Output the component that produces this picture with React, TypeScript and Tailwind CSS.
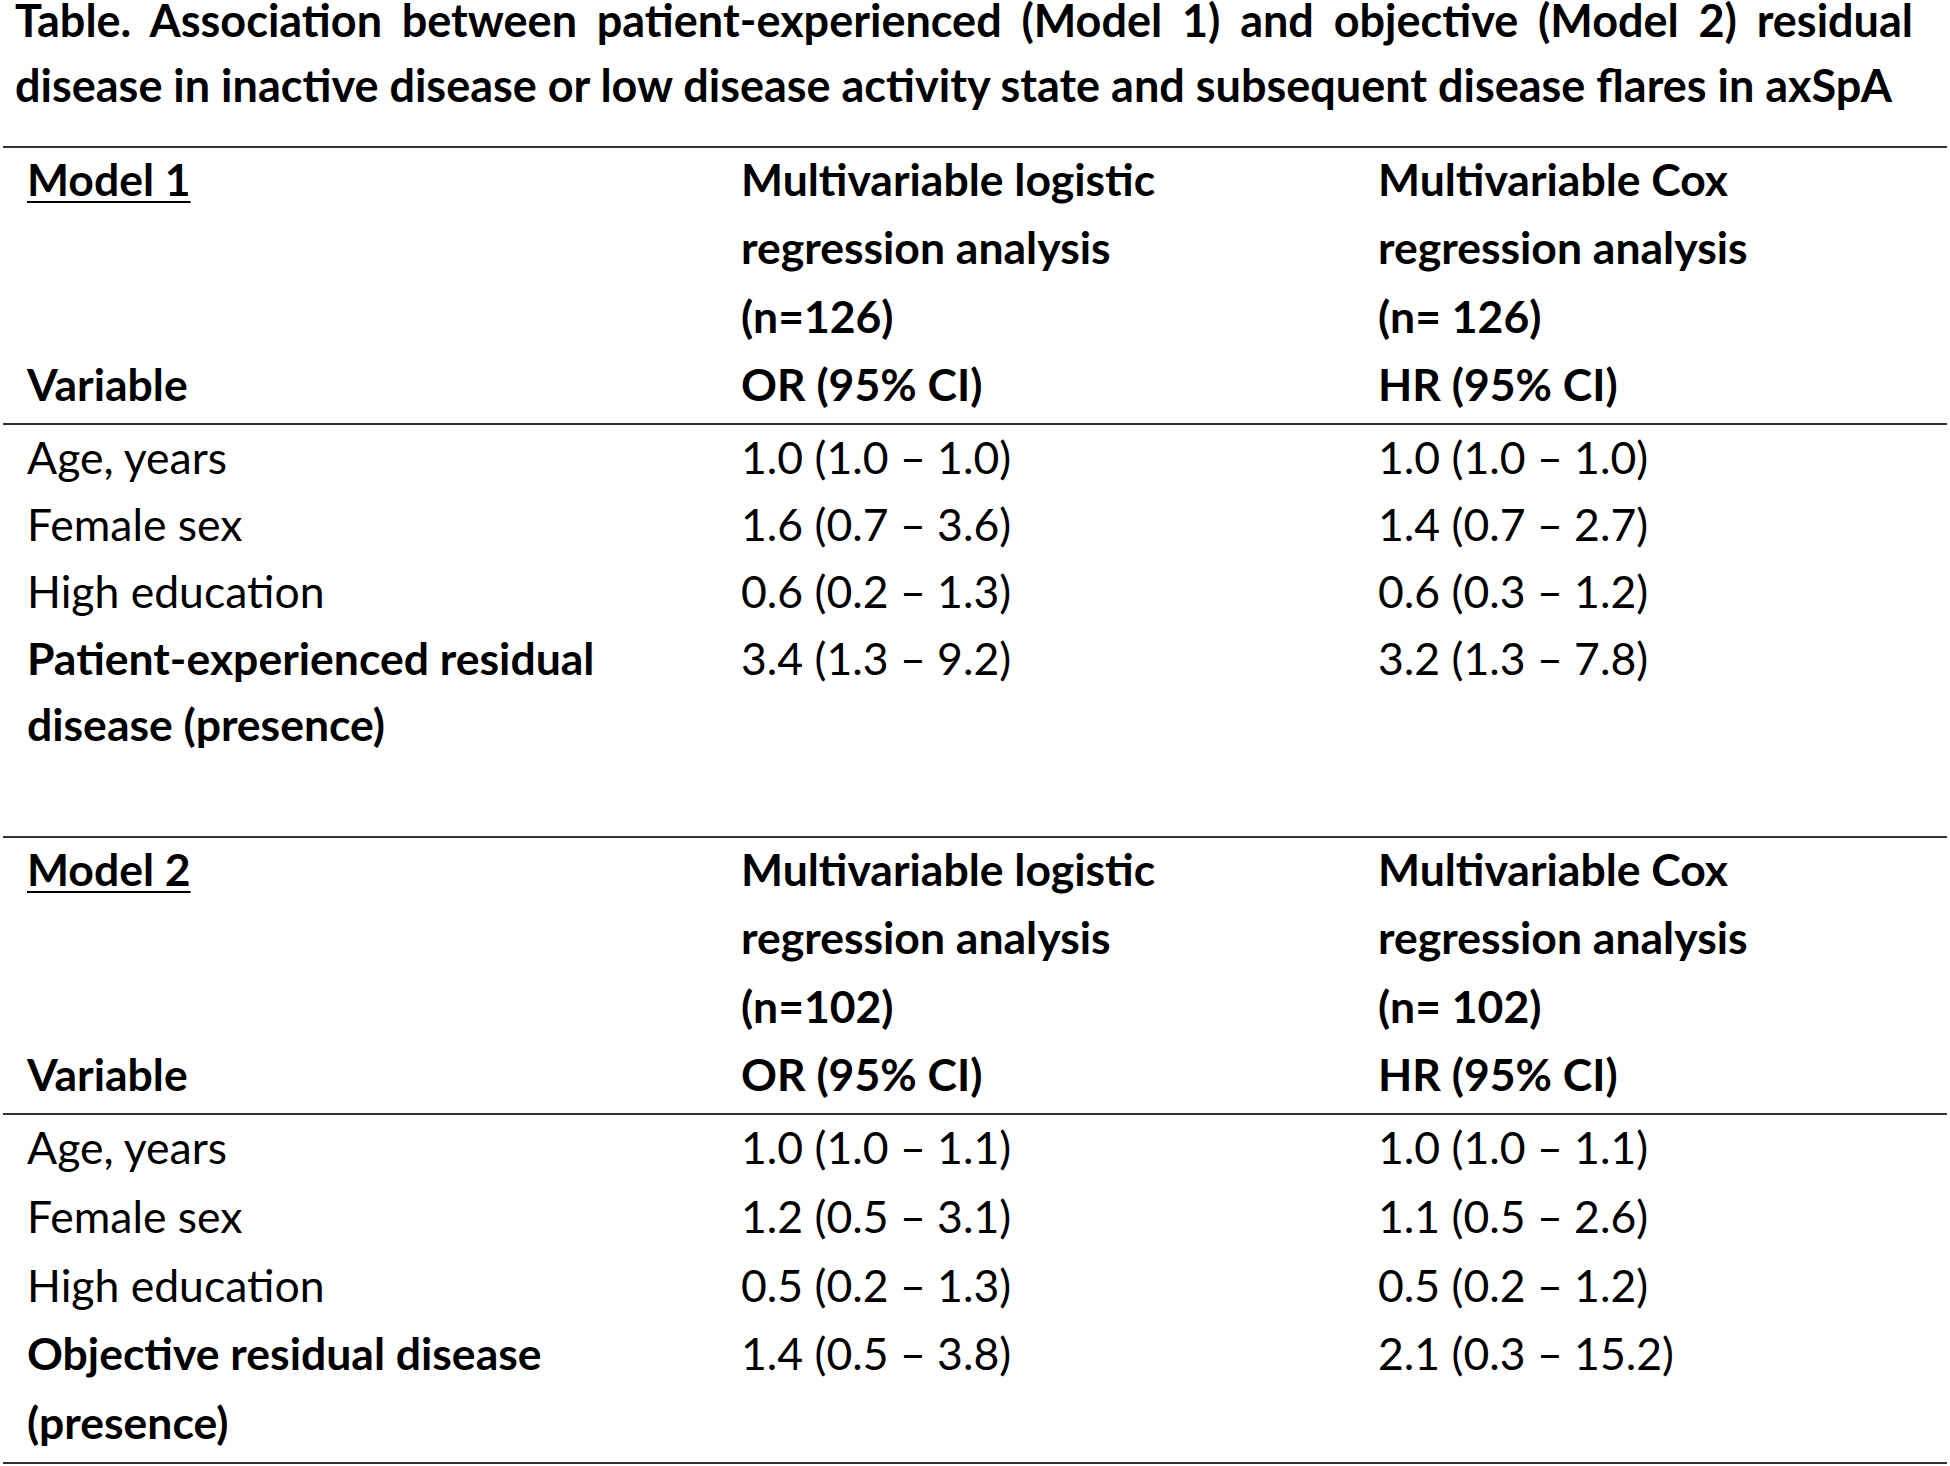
import React from "react";

type Row = { label: string[]; bold?: boolean; or: string; hr: string };

type Model = {
  name: string;
  nOr: string;
  nHr: string;
  bodyClass: string;
  rows: Row[];
};

const models: Model[] = [
  {
    name: "Model 1",
    nOr: "(n=126)",
    nHr: "(n= 126)",
    bodyClass: "-mt-[1px] pb-[78px] leading-[66.8px]",
    rows: [
      { label: ["Age, years"], or: "1.0 (1.0 – 1.0)", hr: "1.0 (1.0 – 1.0)" },
      { label: ["Female sex"], or: "1.6 (0.7 – 3.6)", hr: "1.4 (0.7 – 2.7)" },
      { label: ["High education"], or: "0.6 (0.2 – 1.3)", hr: "0.6 (0.3 – 1.2)" },
      {
        label: ["Patient-experienced residual", "disease (presence)"],
        bold: true,
        or: "3.4 (1.3 – 9.2)",
        hr: "3.2 (1.3 – 7.8)",
      },
    ],
  },
  {
    name: "Model 2",
    nOr: "(n=102)",
    nHr: "(n= 102)",
    bodyClass: "-mt-[2px] pb-[6px] leading-[68.6px]",
    rows: [
      { label: ["Age, years"], or: "1.0 (1.0 – 1.1)", hr: "1.0 (1.0 – 1.1)" },
      { label: ["Female sex"], or: "1.2 (0.5 – 3.1)", hr: "1.1 (0.5 – 2.6)" },
      { label: ["High education"], or: "0.5 (0.2 – 1.3)", hr: "0.5 (0.2 – 1.2)" },
      {
        label: ["Objective residual disease", "(presence)"],
        bold: true,
        or: "1.4 (0.5 – 3.8)",
        hr: "2.1 (0.3 – 15.2)",
      },
    ],
  },
];

const gridCols = "grid grid-cols-[714px_637px_1fr] pl-[24px]";

const ModelBlock = ({ model, last }: { model: Model; last: boolean }) => {
  return (
    <>
      <section className="mx-[3px] border-t-2 border-[#333333]">
        <div className={`${gridCols} -mt-[3px] pb-[5px] font-bold leading-[68.3px]`}>
          <div>
            <div>
              <span className="underline decoration-2 underline-offset-[5px]">{model.name}</span>
            </div>
            <div>&nbsp;</div>
            <div>&nbsp;</div>
            <div>Variable</div>
          </div>
          <div>
            <div>Multivariable logistic</div>
            <div>regression analysis</div>
            <div>{model.nOr}</div>
            <div>OR (95% CI)</div>
          </div>
          <div>
            <div>Multivariable Cox</div>
            <div>regression analysis</div>
            <div>{model.nHr}</div>
            <div>HR (95% CI)</div>
          </div>
        </div>
      </section>
      <section
        className={`mx-[3px] border-t-2 border-[#333333] ${last ? "border-b-2" : ""}`}
      >
        <div className={`${gridCols} ${model.bodyClass}`}>
          {model.rows.map((row) => (
            <React.Fragment key={row.label[0]}>
              <div className={row.bold ? "font-bold" : ""}>
                {row.label.map((l) => (
                  <div key={l}>{l}</div>
                ))}
              </div>
              <div>{row.or}</div>
              <div>{row.hr}</div>
            </React.Fragment>
          ))}
        </div>
      </section>
    </>
  );
};

export default function App() {
  return (
    <div className="flex h-[1466px] w-[1950px] flex-col overflow-hidden bg-white font-['Lato','Open_Sans',sans-serif] text-[44.5px] text-black">
      <div className="-mt-[12px] pl-[15px] pr-[37px] text-[45px] font-bold leading-[65px]">
        <div className="text-justify [text-align-last:justify]">
          Table. Association between patient-experienced (Model 1) and objective (Model 2) residual
        </div>
        <div>
          disease in inactive disease or low disease activity state and subsequent disease flares in axSpA
        </div>
      </div>
      <div className="mt-[28px]">
        {models.map((m, i) => (
          <ModelBlock key={m.name} model={m} last={i === models.length - 1} />
        ))}
      </div>
    </div>
  );
}
